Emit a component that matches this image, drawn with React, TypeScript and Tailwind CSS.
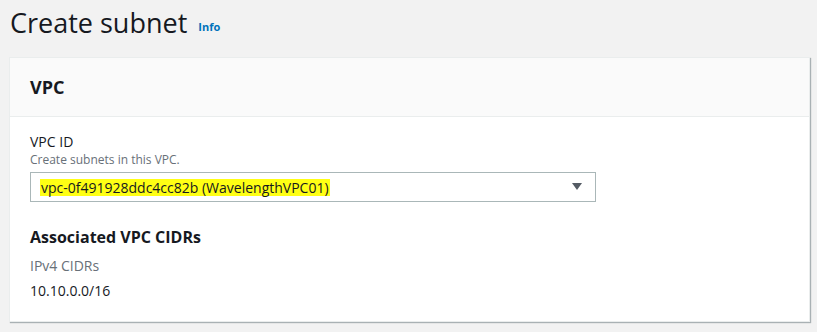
export default function App() {
  return (
    <div
      className="min-h-[332px] w-[817px] bg-[#f2f2f2] pt-[3px] pl-[10px] text-[#16191f]"
      style={{ fontFamily: '"Open Sans", "Liberation Sans", sans-serif' }}
    >
      <div className="flex items-end gap-[11px]">
        <h1 className="text-[27px] leading-[40px] font-normal">Create subnet</h1>
        <span className="mb-[8px] text-[11px] font-bold text-[#0073bb]">Info</span>
      </div>

      <section className="mt-[14px] w-[801px] -ml-[1px] border border-[#eaeded] bg-white shadow-[1px_1px_1px_0_rgba(0,28,36,0.3)]">
        <div className="flex h-[59px] items-center border-b border-[#eaeded] bg-[#fafafa] px-[20px]">
          <h2 className="text-[18px] font-bold">VPC</h2>
        </div>

        <div className="px-[20px] pt-[15px] pb-[20px]">
          <div className="text-[14px] leading-[20px]">VPC ID</div>
          <div className="text-[12px] leading-[16px] text-[#687078]">Create subnets in this VPC.</div>

          <div className="mt-[4px] flex h-[30px] w-[566px] items-center justify-between border border-[#aab7b8] bg-white pl-[9px] pr-[12px]">
            <span className="bg-[#ffff14] px-[1px] text-[14px] leading-[17px]">
              vpc-0f491928ddc4cc82b (WavelengthVPC01)
            </span>
            <svg width="12" height="8" viewBox="0 0 12 8" aria-hidden>
              <path d="M1 0h10L6 7z" fill="#545b64" />
            </svg>
          </div>

          <h3 className="mt-[24px] text-[16px] leading-[22px] font-bold">Associated VPC CIDRs</h3>
          <div className="mt-[8px] text-[14px] leading-[20px] text-[#687078]">IPv4 CIDRs</div>
          <div className="mt-[5px] text-[14px] leading-[20px]">10.10.0.0/16</div>
        </div>
      </section>
    </div>
  );
}
